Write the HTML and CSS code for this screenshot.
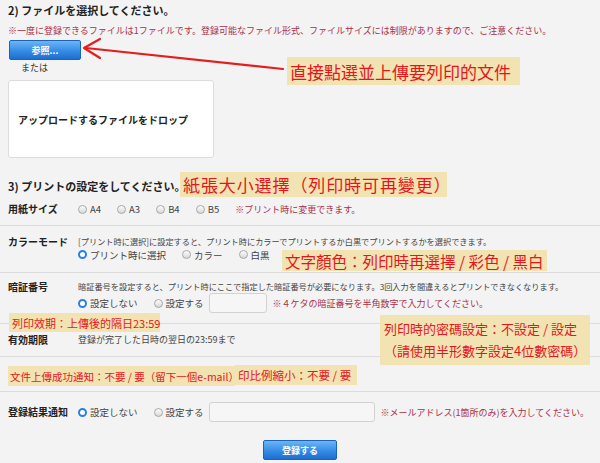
FILE: index.html
```html
<!DOCTYPE html>
<html lang="ja">
<head>
    <meta charset="UTF-8">
    <meta name="viewport" content="width=device-width, initial-scale=1.0">
    <title>プリント登録</title>
    <link rel="stylesheet" href="styles.css">
</head>
<body>
    <div class="page">
        <section class="upload">
            <h2 class="step">2) ファイルを選択してください。</h2>
            <p class="warn">※一度に登録できるファイルは1ファイルです。登録可能なファイル形式、ファイルサイズには制限がありますので、ご注意ください。</p>
            <button class="btn btn-browse">参照...</button>
            <p class="or">または</p>
            <div class="dropzone">アップロードするファイルをドロップ</div>
        </section>

        <section class="settings">
            <h2 class="step">3) プリントの設定をしてください。</h2>

            <div class="row row-size">
                <div class="label">用紙サイズ</div>
                <div class="field">
                    <div class="options">
                        <span class="opt"><span class="radio"></span>A4</span>
                        <span class="opt"><span class="radio"></span>A3</span>
                        <span class="opt"><span class="radio"></span>B4</span>
                        <span class="opt"><span class="radio"></span>B5</span>
                        <span class="warn-inline">※プリント時に変更できます。</span>
                    </div>
                </div>
            </div>

            <div class="row row-color">
                <div class="label">カラーモード</div>
                <div class="field">
                    <p class="desc">[プリント時に選択]に設定すると、プリント時にカラーでプリントするか白黒でプリントするかを選択できます。</p>
                    <div class="options">
                        <span class="opt"><span class="radio on"></span>プリント時に選択</span>
                        <span class="opt"><span class="radio"></span>カラー</span>
                        <span class="opt"><span class="radio"></span>白黒</span>
                    </div>
                </div>
            </div>

            <div class="row row-pin">
                <div class="label">暗証番号</div>
                <div class="field">
                    <p class="desc">暗証番号を設定すると、プリント時にここで指定した暗証番号が必要になります。3回入力を間違えるとプリントできなくなります。</p>
                    <div class="options tall">
                        <span class="opt"><span class="radio on"></span>設定しない</span>
                        <span class="opt"><span class="radio"></span>設定する</span>
                        <input class="text-input pin-input" type="text">
                        <span class="warn-inline">※４ケタの暗証番号を半角数字で入力してください。</span>
                    </div>
                </div>
            </div>

            <div class="row row-expire">
                <div class="label">有効期限</div>
                <div class="field">
                    <p class="plain">登録が完了した日時の翌日の23:59まで</p>
                </div>
            </div>

            <div class="row row-blank"></div>

            <div class="row row-notify">
                <div class="label">登録結果通知</div>
                <div class="field">
                    <div class="options tall">
                        <span class="opt"><span class="radio on"></span>設定しない</span>
                        <span class="opt"><span class="radio"></span>設定する</span>
                        <input class="text-input mail-input" type="text">
                        <span class="warn-inline">※メールアドレス(1箇所のみ)を入力してください。</span>
                    </div>
                </div>
            </div>
        </section>

        <div class="submit">
            <button class="btn btn-submit">登録する</button>
        </div>

        <!-- annotations drawn over the screenshot -->
        <svg class="arrow" width="600" height="463" viewBox="0 0 600 463">
            <path d="M283 69 L86 48" />
            <path d="M100 39 L84 48 L100 58" />
        </svg>
        <div class="callout c-upload">直接點選並上傳要列印的文件</div>
        <div class="callout c-size">紙張大小選擇（列印時可再變更）</div>
        <div class="callout c-color">文字顏色：列印時再選擇 / 彩色 / 黑白</div>
        <div class="callout c-pin">列印時的密碼設定：不設定 / 設定<br>（請使用半形數字設定4位數密碼）</div>
        <div class="callout c-expire">列印效期：上傳後的隔日23:59</div>
        <div class="callout c-notify">文件上傳成功通知：不要 / 要（留下一個e-mail）</div>
        <div class="callout c-scale">印比例縮小：不要 / 要</div>
    </div>
</body>
</html>
```

FILE: styles.css
```css
body {
    margin: 0;
    background-color: #f3f3f3;
    font-family: "Noto Sans CJK JP", "Noto Sans", sans-serif;
    color: #333;
}

.page {
    position: relative;
    width: 600px;
    height: 463px;
    overflow: hidden;
}

p {
    margin: 0;
}

.step {
    margin: 0;
    font-size: 11px;
    line-height: 16px;
    font-weight: bold;
    color: #222;
}

.upload {
    padding: 2px 8px 0;
}

.warn {
    margin-top: 6px;
    font-size: 9px;
    line-height: 14px;
    color: #a8304a;
    white-space: nowrap;
}

.btn {
    display: block;
    height: 20px;
    padding: 0;
    border: 1px solid #1b62b8;
    border-radius: 2px;
    background: linear-gradient(#6cb6f6, #3a8fe6 50%, #1c6ed0);
    color: #fff;
    font-family: "Noto Sans CJK JP", sans-serif;
    font-size: 9px;
    font-weight: bold;
}

.btn-browse {
    width: 72px;
    margin: 2px 0 0 1px;
}

.or {
    margin: 2px 0 0 13px;
    font-size: 9px;
    line-height: 12px;
}

.dropzone {
    box-sizing: border-box;
    display: flex;
    align-items: center;
    width: 206px;
    height: 78px;
    margin-top: 6px;
    padding-left: 9px;
    background-color: #fff;
    border: 1px solid #dcdcdc;
    border-radius: 3px;
    font-size: 10px;
    font-weight: bold;
    color: #222;
}

.settings .step {
    margin-top: 20px;
    padding: 0 8px;
}

.row {
    display: grid;
    grid-template-columns: 70px 1fr;
    padding: 0 8px;
    border-bottom: 1px solid #dcdcdc;
}

.label {
    font-size: 10px;
    line-height: 13px;
    font-weight: bold;
    color: #222;
}

.row-size {
    padding-top: 8px;
    padding-bottom: 9px;
}

.row-size .label {
    line-height: 14px;
}

.row-color {
    padding-top: 9px;
    padding-bottom: 11px;
}

.row-pin {
    padding-top: 7px;
    padding-bottom: 10px;
}

.row-expire {
    padding-top: 9px;
    padding-bottom: 10px;
}

.row-blank {
    height: 34px;
}

.row-notify {
    padding-top: 10px;
    border-bottom: none;
}

.row-notify .label {
    line-height: 20px;
}

.desc {
    font-size: 8.2px;
    line-height: 13px;
    white-space: nowrap;
    color: #444;
}

.plain {
    font-size: 9px;
    line-height: 13px;
    color: #444;
}

.options {
    display: flex;
    align-items: center;
    height: 13px;
    font-size: 9.5px;
    white-space: nowrap;
}

.row-size .options {
    height: 14px;
}

.options.tall {
    height: 20px;
}

.opt {
    display: flex;
    align-items: center;
    gap: 3px;
    margin-right: 16px;
    color: #444;
}

.radio {
    box-sizing: border-box;
    width: 9px;
    height: 9px;
    border: 1px solid #a8a8a8;
    border-radius: 50%;
    background: linear-gradient(#fdfdfd, #d8d8d8);
}

.radio.on {
    border: 2.5px solid #2a7fe3;
    background: #fff;
}

.warn-inline {
    font-size: 9px;
    color: #a8304a;
}

.text-input {
    box-sizing: border-box;
    height: 20px;
    margin: 0 6px 0 -11px;
    border: 1px solid #d2d2d2;
    border-radius: 3px;
    background-color: #f6f6f6;
}

.pin-input {
    width: 58px;
}

.mail-input {
    width: 166px;
}

.submit {
    display: flex;
    justify-content: center;
    margin-top: 18px;
}

.btn-submit {
    width: 74px;
}

.arrow {
    position: absolute;
    left: 0;
    top: 0;
    pointer-events: none;
}

.arrow path {
    fill: none;
    stroke: #e51d1d;
    stroke-width: 2.2;
    stroke-linecap: round;
    stroke-linejoin: round;
}

.callout {
    position: absolute;
    box-sizing: border-box;
    display: flex;
    align-items: center;
    padding: 0 3px;
    background-color: #f1e4b2;
    color: #e8141c;
    font-family: "Noto Sans CJK TC", sans-serif;
    white-space: nowrap;
}

.c-upload {
    left: 287px;
    top: 57px;
    width: 233px;
    height: 28px;
    font-size: 17px;
}

.c-size {
    left: 180px;
    top: 172px;
    width: 267px;
    height: 25px;
    font-size: 17px;
    letter-spacing: 0.9px;
}

.c-color {
    left: 282px;
    top: 250px;
    width: 265px;
    height: 21px;
    font-size: 15.5px;
}

.c-pin {
    left: 380px;
    top: 315px;
    width: 210px;
    height: 50px;
    padding: 0 4px;
    font-size: 13px;
    line-height: 22px;
}

.c-expire {
    left: 9px;
    top: 313px;
    width: 151px;
    height: 19px;
    font-size: 11px;
}

.c-notify {
    left: 8px;
    top: 366px;
    width: 227px;
    height: 20px;
    padding: 0 2px;
    font-size: 10.5px;
}

.c-scale {
    left: 235px;
    top: 365px;
    width: 122px;
    height: 20px;
    font-size: 11.5px;
}
```
